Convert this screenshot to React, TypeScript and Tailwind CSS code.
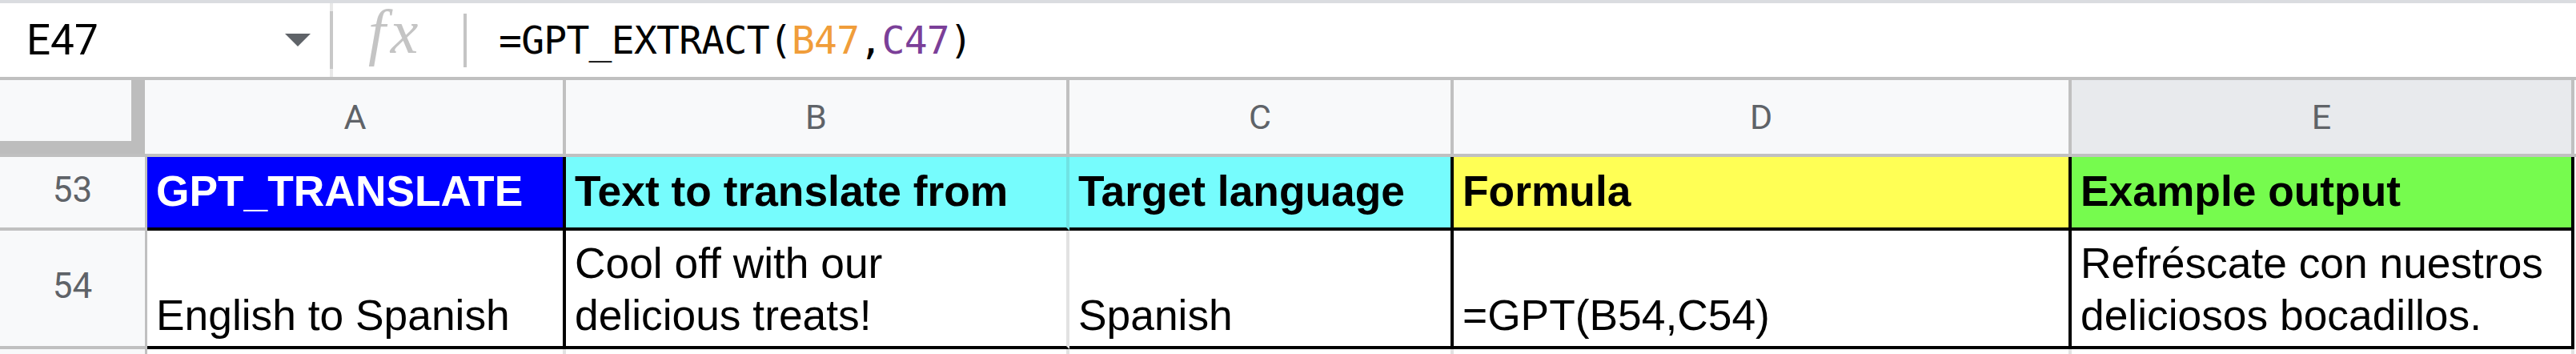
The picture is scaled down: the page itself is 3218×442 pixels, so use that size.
import React from 'react';

const sheetFont = "font-['Liberation_Sans',Arial,sans-serif]";
const uiFont = "font-['Roboto',sans-serif]";

const FormulaBar: React.FC = () => (
  <div>
    <div className="h-[4px] bg-[#dadce0]" />
    <div className="flex h-[92px] items-center bg-white">
      {/* name box */}
      <div className="flex h-full w-[412px] items-center justify-between pl-[33px] pr-[24px]">
        <span className={`${uiFont} text-[53px] leading-none text-black`}>E47</span>
        <span className="h-0 w-0 border-x-[16px] border-t-[16px] border-x-transparent border-t-[#5f6368]" />
      </div>
      <div className="flex h-full w-[4px] items-center bg-[#e8e8e8]">
        <div className="h-[72px] w-full bg-[#c8c8c8]" />
      </div>
      <div className="ml-[44px] flex h-full w-[119px] items-end pb-[21px]">
        <span className="font-['Liberation_Serif',serif] text-[78px] italic leading-[70px] tracking-[6px] text-[#c4c4c4]">
          fx
        </span>
      </div>
      <div className="h-[67px] w-[4px] bg-[#c4c4c4]" />
      <div className="ml-[40px] font-['DejaVu_Sans_Mono',monospace] text-[48px] leading-none tracking-[-0.75px] text-black">
        =GPT_EXTRACT(<span className="text-[#f09d3a]">B47</span>,<span className="text-[#7b3f98]">C47</span>)
      </div>
    </div>
    <div className="h-[4px] bg-[#c0c0c0]" />
  </div>
);

const ColHeader: React.FC<{ label: string; width: string; active?: boolean }> = ({ label, width, active }) => (
  <div
    className={`flex h-full items-center justify-center border-r-4 border-[#c0c0c0] ${uiFont} text-[43px] text-[#5f6368] ${width} ${
      active ? 'bg-[#e8eaed]' : 'bg-[#f8f9fa]'
    }`}
  >
    {label}
  </div>
);

const RowHeader: React.FC<{ label: string; height: string }> = ({ label, height }) => (
  <div
    className={`flex w-[184px] shrink-0 items-center justify-center border-r-[3px] border-b-4 border-[#c0c0c0] bg-[#f8f9fa] pb-[6px] ${uiFont} text-[44px] font-normal text-[#5f6368] ${height}`}
  >
    {label}
  </div>
);

export default function App() {
  return (
    <div className="h-[442px] w-[3218px] overflow-hidden bg-white">
      <FormulaBar />

      {/* column headers */}
      <div className="flex h-[96px] border-b-4 border-[#c0c0c0] bg-[#f8f9fa]">
        <div className="flex h-full w-[184px] shrink-0">
          <div className="h-full w-[181px] border-r-[17px] border-b-[16px] border-[#bdbdbd] bg-[#f8f9fa]" />
        </div>
        <ColHeader label="A" width="w-[523px]" />
        <ColHeader label="B" width="w-[629px]" />
        <ColHeader label="C" width="w-[480px]" />
        <ColHeader label="D" width="w-[772px]" />
        <ColHeader label="E" width="w-[628px]" active />
        <div className="flex-1 bg-[#f8f9fa]" />
      </div>

      {/* row 53 */}
      <div className={`flex h-[92px] ${sheetFont} text-[53.33px] font-bold leading-[65px] whitespace-nowrap`}>
        <RowHeader label="53" height="h-[92px]" />
        <div className="flex w-[523px] items-end border-r-4 border-b-4 border-black bg-[#0000ff] pb-[13px] pl-[11px] text-white">
          GPT_TRANSLATE
        </div>
        <div className="flex w-[629px] items-end border-r-4 border-b-4 border-black border-r-[#6fe3e4] bg-[#76fcfd] pb-[13px] pl-[11px] text-black">
          Text to translate from
        </div>
        <div className="flex w-[480px] items-end border-r-4 border-b-4 border-black bg-[#76fcfd] pb-[13px] pl-[11px] text-black">
          Target language
        </div>
        <div className="flex w-[772px] items-end border-r-4 border-b-4 border-black bg-[#ffff55] pb-[13px] pl-[11px] text-black">
          Formula
        </div>
        <div className="flex w-[628px] items-end border-r-4 border-b-4 border-black bg-[#76fb4e] pb-[13px] pl-[11px] text-black">
          Example output
        </div>
        <div className="flex-1 bg-white" />
      </div>

      {/* row 54 */}
      <div className={`flex h-[148px] ${sheetFont} text-[53.33px] leading-[65px] text-black whitespace-nowrap`}>
        <RowHeader label="54" height="h-[148px]" />
        <div className="flex w-[523px] items-end border-r-4 border-b-4 border-black pb-[6px] pl-[11px]">
          English to Spanish
        </div>
        <div className="flex w-[629px] items-end border-r-4 border-b-4 border-black border-r-[#e2e2e2] pb-[6px] pl-[11px]">
          <span>
            Cool off with our
            <br />
            delicious treats!
          </span>
        </div>
        <div className="flex w-[480px] items-end border-r-4 border-b-4 border-black pb-[6px] pl-[11px]">Spanish</div>
        <div className="flex w-[772px] items-end border-r-4 border-b-4 border-black pb-[6px] pl-[11px]">=GPT(B54,C54)</div>
        <div className="flex w-[628px] items-end border-r-4 border-b-4 border-black pb-[6px] pl-[11px]">
          <span>
            Refréscate con nuestros
            <br />
            deliciosos bocadillos.
          </span>
        </div>
        <div className="flex-1 bg-white" />
      </div>

      {/* start of row 55 */}
      <div className="flex h-[6px]">
        <div className="w-[184px] shrink-0 border-r-[3px] border-[#c0c0c0] bg-[#f8f9fa]" />
        <div className="w-[523px] border-r-4 border-[#e2e2e2]" />
        <div className="w-[629px] border-r-4 border-[#e2e2e2]" />
        <div className="w-[480px] border-r-4 border-[#e2e2e2]" />
        <div className="w-[772px] border-r-4 border-[#e2e2e2]" />
        <div className="w-[628px] border-r-4 border-[#e2e2e2]" />
        <div className="flex-1" />
      </div>
    </div>
  );
}
